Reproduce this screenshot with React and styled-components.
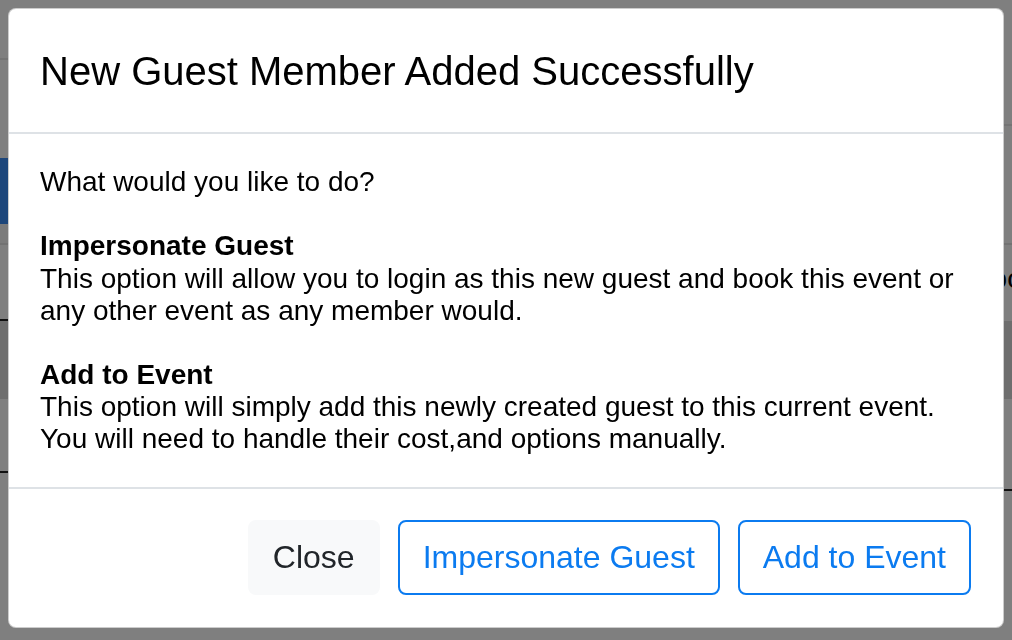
import React from "react";
import styled, { createGlobalStyle } from "styled-components";

const GlobalStyle = createGlobalStyle`
  html, body {
    margin: 0;
    padding: 0;
    background: #ffffff;
    font-family: "Liberation Sans", Arial, Helvetica, sans-serif;
  }
  * { box-sizing: border-box; }
`;

// Page behind the dialog (mostly hidden by the backdrop)
const Page = styled.div`
  display: grid;
  grid-template-columns: 500px 1fr;
  height: 640px;
  overflow: hidden;
`;

const Column = styled.div`
  display: flex;
  flex-direction: column;
  overflow: hidden;
`;

const Block = styled.div`
  height: ${(p) => p.h}px;
  flex-shrink: 0;
  background: ${(p) => p.bg || "#ffffff"};
  border-bottom: ${(p) => (p.line ? `2px solid ${p.line}` : "none")};
`;

const BlueButton = styled.div`
  height: 66px;
  width: 160px;
  background: #3b8df5;
  flex-shrink: 0;
`;

const RowLabel = styled.div`
  height: 76px;
  padding: 18px 0 0 476px;
  font-size: 28px;
  color: #000;
  white-space: nowrap;
`;

// Backdrop + dialog
const Backdrop = styled.div`
  position: fixed;
  inset: 0;
  background: rgba(0, 0, 0, 0.5);
`;

const DialogLayer = styled.div`
  position: fixed;
  inset: 0;
  padding: 8px;
`;

const Dialog = styled.div`
  width: 996px;
  background: #ffffff;
  border: 1px solid rgba(0, 0, 0, 0.2);
  border-radius: 8px;
  color: #000;
  display: flex;
  flex-direction: column;
`;

const Header = styled.div`
  padding: 32px 31px 31px;
  border-bottom: 2px solid #dee2e6;
`;

const Title = styled.h5`
  margin: 0;
  font-size: 40px;
  font-weight: 400;
  line-height: 60px;
`;

const Body = styled.div`
  padding: 32px 31px 31px;
  font-size: 28px;
  line-height: 32.17px;
`;

const Para = styled.p`
  margin: 0;
  & + & {
    margin-top: 32.17px;
  }
`;

const OptionName = styled.strong`
  display: block;
  font-weight: 700;
`;

const Footer = styled.div`
  display: flex;
  justify-content: flex-end;
  align-items: center;
  gap: 18px;
  padding: 31px 32px 32px;
  border-top: 2px solid #dee2e6;
`;

const Button = styled.button`
  font-family: "Liberation Sans", Arial, Helvetica, sans-serif;
  font-size: 32px;
  line-height: 47px;
  padding: 12px 23px;
  border-radius: 8px;
  border: 2px solid ${(p) => (p.variant === "light" ? "#f8f9fa" : "#0b7bf0")};
  background: ${(p) => (p.variant === "light" ? "#f8f9fa" : "#ffffff")};
  color: ${(p) => (p.variant === "light" ? "#212529" : "#0b7bf0")};
  cursor: pointer;
`;

export default function App() {
  return (
    <>
      <GlobalStyle />
      <Page>
        <Column>
          <Block h={60} line="#e9e9e9" />
          <Block h={98} />
          <BlueButton />
          <Block h={21} bg="#f7f7f7" line="#e4e4e4" />
          <Block h={76} line="#222222" />
          <Block h={78} bg="#dcdcdc" />
          <Block h={74} line="#222222" />
        </Column>
        <Column>
          <Block h={126} line="#e9e9e9" />
          <Block h={119} line="#e4e4e4" />
          <RowLabel>book</RowLabel>
          <Block h={78} bg="#dcdcdc" />
          <Block h={92} line="#222222" />
        </Column>
      </Page>
      <Backdrop />
      <DialogLayer>
        <Dialog>
          <Header>
            <Title>New Guest Member Added Successfully</Title>
          </Header>
          <Body>
            <Para>What would you like to do?</Para>
            <Para>
              <OptionName>Impersonate Guest</OptionName>
              This option will allow you to login as this new guest and book this event or any
              other event as any member would.
            </Para>
            <Para>
              <OptionName>Add to Event</OptionName>
              This option will simply add this newly created guest to this current event.
              <br />
              You will need to handle their cost,and options manually.
            </Para>
          </Body>
          <Footer>
            <Button variant="light">Close</Button>
            <Button>Impersonate Guest</Button>
            <Button>Add to Event</Button>
          </Footer>
        </Dialog>
      </DialogLayer>
    </>
  );
}
